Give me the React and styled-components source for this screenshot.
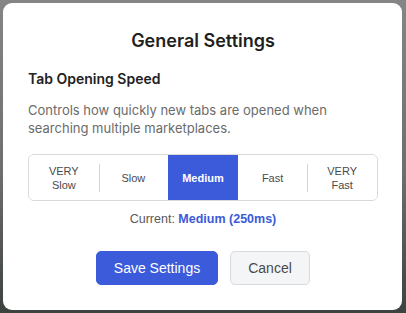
import React from 'react'
import styled, { createGlobalStyle } from 'styled-components'

const GlobalStyle = createGlobalStyle`
  * { box-sizing: border-box; }
  html, body {
    margin: 0;
    padding: 0;
  }
  body {
    background: linear-gradient(180deg, #858585 0%, #6e6e6e 55%, #3c423e 100%);
    min-height: 313px;
  }
`

const Backdrop = styled.div`
  width: 406px;
  height: 313px;
  padding: 3px 4px 3px 3px;
`

const Modal = styled.div`
  width: 399px;
  height: 307px;
  background: #fff;
  border-radius: 9px;
  padding: 27px 24px 0 25px;
  display: flex;
  flex-direction: column;
  font-family: Inter, "Noto Sans", sans-serif;
`

const Title = styled.h2`
  margin: 0;
  text-align: center;
  font-size: 18px;
  line-height: 22px;
  font-weight: 600;
  color: #1f1f1f;
`

const SectionTitle = styled.h3`
  margin: 17px 0 0;
  font-size: 14px;
  line-height: 20px;
  font-weight: 600;
  color: #222;
`

const Description = styled.p`
  margin: 12px 0 0;
  font-size: 13px;
  line-height: 18px;
  color: #6b6b6b;
`

const Segmented = styled.div`
  margin-top: 17px;
  display: flex;
  height: 47px;
  border: 1px solid #d9d9d9;
  border-radius: 6px;
  overflow: hidden;
`

const Segment = styled.button`
  position: relative;
  flex: 1;
  border: 0;
  margin: 0;
  padding: 0 4px;
  background: ${p => (p.$active ? '#3b5bdb' : '#fff')};
  color: ${p => (p.$active ? '#fff' : '#4a4a4a')};
  font-family: "Liberation Sans", Arial, sans-serif;
  font-size: 11px;
  line-height: 14px;
  font-weight: ${p => (p.$active ? 700 : 400)};
  cursor: pointer;

  & + &::before {
    content: "";
    position: absolute;
    left: 0;
    top: 9px;
    bottom: 8px;
    width: 1px;
    background: #d4d4d4;
  }
`

const Current = styled.div`
  margin-top: 10px;
  text-align: center;
  font-family: "Liberation Sans", Arial, sans-serif;
  font-size: 12.5px;
  line-height: 16px;
  color: #5a5a5a;

  strong {
    color: #3b5bd6;
    font-weight: 700;
  }
`

const Actions = styled.div`
  margin-top: 24px;
  display: flex;
  justify-content: center;
  gap: 12px;
`

const Button = styled.button`
  height: 34px;
  padding: 0 16px;
  border-radius: 5px;
  font-family: "Liberation Sans", Arial, sans-serif;
  font-size: 14px;
  cursor: pointer;
  border: 1px solid ${p => (p.$primary ? '#3b5bdb' : '#d7dadf')};
  background: ${p => (p.$primary ? '#3b5bdb' : '#f4f5f7')};
  color: ${p => (p.$primary ? '#fff' : '#4a4a4a')};
  width: ${p => p.$width}px;
`

const speeds = [
  { key: 'very-slow', label: ['VERY', 'Slow'] },
  { key: 'slow', label: ['Slow'] },
  { key: 'medium', label: ['Medium'] },
  { key: 'fast', label: ['Fast'] },
  { key: 'very-fast', label: ['VERY', 'Fast'] },
]

export default function App() {
  const active = 'medium'
  return (
    <>
      <GlobalStyle />
      <Backdrop>
        <Modal>
          <Title>General Settings</Title>
          <SectionTitle>Tab Opening Speed</SectionTitle>
          <Description>
            Controls how quickly new tabs are opened when searching multiple marketplaces.
          </Description>
          <Segmented>
            {speeds.map(s => (
              <Segment key={s.key} $active={s.key === active}>
                {s.label.map((l, i) => (
                  <React.Fragment key={i}>
                    {i > 0 && <br />}
                    {l}
                  </React.Fragment>
                ))}
              </Segment>
            ))}
          </Segmented>
          <Current>
            Current: <strong>Medium (250ms)</strong>
          </Current>
          <Actions>
            <Button $primary $width={122}>Save Settings</Button>
            <Button $width={80}>Cancel</Button>
          </Actions>
        </Modal>
      </Backdrop>
    </>
  )
}
